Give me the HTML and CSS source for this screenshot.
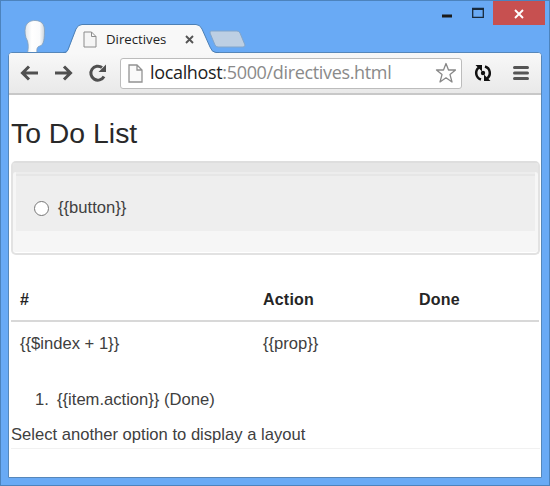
FILE: index.html
```html
<!DOCTYPE html>
<html lang="en">
<head>
<meta charset="utf-8">
<title>Directives</title>
<link rel="stylesheet" href="styles.css">
</head>
<body>
<div class="window">
  <header class="titlebar">
    <svg class="profile" width="26" height="34" viewBox="0 0 26 34">
      <defs><linearGradient id="face"><stop offset="0" stop-color="#dfe5eb"/><stop offset=".35" stop-color="#fff"/><stop offset=".75" stop-color="#fafbfc"/><stop offset="1" stop-color="#cbd4dc"/></linearGradient></defs>
      <path d="M4.500 34C5.500 29 5.500 26 4.500 22C2 18 1.500 12 2.500 8C4 3 8 1.500 12 1.500C18 1.500 21.500 5 21.500 11C21.500 19 21 26 17 27C14 27.500 13.500 30 14 34Z" fill="url(#face)" stroke="#849fba" stroke-width=".8"/>
    </svg>
    <div class="tab">
      <svg class="tab-shape" width="156" height="30" viewBox="0 0 156 30">
        <path d="M0 30C4 29 5 27 6 24L13 5Q15 .8 19 .8H133Q137 .8 139 5L147 23Q149 28.500 153 28.500V30Z" fill="#f8f8f8"/>
        <path d="M0 28.500C4 28.500 5 26 6 23L13 5Q15 .5 19 .5H133Q137 .5 139 5L147 23Q149 28.500 153 28.500H156" fill="none" stroke="#4d80b5"/>
      </svg>
      <svg class="page-icon" width="14" height="17" viewBox="0 0 14 17"><path d="M1 1H8.500L13 5.500V16H1ZM8.500 1V5.500H13" fill="#f5f5f5" stroke="#8c8c8c"/></svg>
      <span class="tab-title">Directives</span>
      <svg class="tab-close" width="9" height="9" viewBox="0 0 9 9"><path d="M1 1L8 8M8 1L1 8" stroke="#555" stroke-width="1.900"/></svg>
    </div>
    <svg class="new-tab" width="37" height="18" viewBox="0 0 37 18"><path d="M2 1H28Q30 1 31 3L36 15Q36 17 34 17H9Q7 17 6 15L1 3Q1 1 2 1Z" fill="#bdcfe3" stroke="#81a5cb"/></svg>
    <div class="controls">
      <svg width="10" height="22" viewBox="0 0 10 22"><path d="M0 15H10" stroke="#1b1b1b" stroke-width="3"/></svg>
      <svg width="12" height="22" viewBox="0 0 12 22"><path d="M.7 7.500H11.300V16.300H.7Z" fill="none" stroke="#182a3c" stroke-width="1.300"/><path d="M0 8H12" stroke="#182a3c" stroke-width="2"/></svg>
      <div class="close"><svg width="10" height="10" viewBox="0 0 10 10"><path d="M1 1L9 9M9 1L1 9" stroke="#fff" stroke-width="1.900"/></svg></div>
    </div>
  </header>
  <main class="browser">
    <nav class="toolbar">
      <svg width="88" height="20" viewBox="0 0 88 20" fill="none" stroke="#505050" stroke-width="3">
        <path d="M19 10H4M10 3.500L3.500 10L10 16.500"/>
        <path d="M36 10H51M45 3.500L51.500 10L45 16.500"/>
        <path d="M85 13.500A7 7 0 1 1 83 4.500"/><path d="M87 1.500V9H79.500Z" fill="#505050" stroke="none"/>
      </svg>
      <div class="address">
        <svg class="page-icon" width="15" height="19" viewBox="0 0 15 19"><path d="M1 1H9L14 6V18H1ZM9 1V6H14" fill="#fafafa" stroke="#929292" stroke-width="1.300"/></svg>
        <span class="url"><b>localhost</b>:5000/directives.html</span>
        <svg class="star" width="22" height="22" viewBox="0 0 22 22"><path d="M11 1.500L13.500 8H20.500L15 12.600L17 20L11 15.800L5 20L7 12.600L1.500 8H8.500Z" fill="#fff" stroke="#888" stroke-width="1.300" stroke-linejoin="round"/></svg>
      </div>
      <svg class="sync" width="18" height="18" viewBox="0 0 18 18"><circle cx="9" cy="9" r="2.200" fill="#111"/><path d="M7 15.500A6.800 6.800 0 0 1 5 3.500M11 2.500A6.800 6.800 0 0 1 13 14.500" fill="none" stroke="#111" stroke-width="2.500"/><path d="M1.500 1H8V7.500ZM16.500 17H10V10.500Z" fill="#111"/></svg>
      <svg class="menu" width="16" height="16" viewBox="0 0 16 16"><path d="M1.500 2.500H14.500M1.500 8H14.500M1.500 13.500H14.500" stroke="#555" stroke-width="3" stroke-linecap="round"/></svg>
    </nav>
    <section class="page">
      <h1><span>To Do List</span></h1>
      <div class="well"><div class="option"><i class="radio"></i><span>{{button}}</span></div></div>
      <table>
        <thead><tr><th class="num">#</th><th class="action">Action</th><th>Done</th></tr></thead>
        <tbody><tr><td>{{$index + 1}}</td><td>{{prop}}</td><td></td></tr></tbody>
      </table>
      <div class="item"><span class="marker">1.</span><span>{{item.action}} (Done)</span></div>
      <p>Select another option to display a layout</p>
    </section>
  </main>
</div>
</body>
</html>
```
FILE: styles.css
```css
* { box-sizing: border-box; }
body { margin: 0; font-family: "Liberation Sans", Arial, sans-serif; font-size: 16.6px; color: #404040; }
svg { display: block; flex: none; }
.window { width: 550px; height: 486px; background: #69aaf5; border: 1px solid #4c83bd; padding: 0 7px 7px; display: flex; flex-direction: column; }
.titlebar { height: 51px; flex: none; display: flex; align-items: flex-start; }
.profile { margin: 18px 0 0 15px; }
.tab { position: relative; z-index: 1; width: 156px; height: 30px; margin: 23px 0 0 14px; padding: 0 25px 0 20px; display: flex; align-items: center; }
.tab-shape { position: absolute; left: 0; top: 0; }
.tab .page-icon, .tab-title, .tab-close { position: relative; }
.tab-title { margin-left: 9px; font: 13.2px/20px "Open Sans", sans-serif; color: #222; white-space: nowrap; }
.tab-close { margin-left: auto; }
.new-tab { margin: 29px 0 0 -10px; position: relative; z-index: 2; }
.controls { margin-left: auto; margin-right: -3px; display: flex; }
.controls svg + svg { margin-left: 20px; }
.close { width: 52px; height: 24px; margin-left: 9px; padding-top: 2px; background: #c75050; display: flex; align-items: center; justify-content: center; }
.browser { flex: 1; border: 1px solid #5687ba; border-radius: 4px 4px 0 0; background: #fff; overflow: hidden; }
.toolbar { height: 42px; background: linear-gradient(#f8f8f8, #e9e9e9); border-bottom: 2px solid #c8c8c8; display: flex; align-items: center; padding-left: 10px; }
.address { width: 342px; height: 31px; margin-left: 13px; padding: 0 4px 0 7px; background: #fff; border: 1px solid #bcbcbc; border-radius: 3px; display: flex; align-items: center; }
.page-icon + .url { margin-left: 7px; }
.url { font: 18px/27px "Open Sans", sans-serif; letter-spacing: -.34px; color: #8a8a8a; white-space: nowrap; position: relative; top: -1px; }
.url b { color: #222; font-weight: 400; }
.star { margin-left: auto; }
.sync { margin-left: 12px; }
.menu { margin-left: 21px; }
.page { padding: 0 1px 0 2px; }
h1 { margin: 0; height: 66px; padding-top: 21px; font-size: 28.4px; line-height: 34px; font-weight: 400; color: #292929; }
.well { height: 94px; border: 2px solid #e2e2e2; border-radius: 5px; background: #f6f6f6; padding: 0 3px; border-top-color: #dedede; box-shadow: inset 0 9px #e6e6e6, inset 0 -1px #fff; }
.option { height: 68px; background: linear-gradient(#e6e6e6 9px, #ededed 9px, #ededed 11px, #e6e6e6 11px, #e6e6e6 13px, #eee 13px); display: flex; align-items: center; padding: 22px 0 0 18px; }
.radio { width: 15px; height: 15px; border: 1px solid #777; border-radius: 50%; background: #fff; margin-right: 9px; }
table { width: 528px; margin-top: 24px; border-collapse: collapse; table-layout: fixed; }
th, td { text-align: left; padding: 0 9px; }
th { height: 42px; border-bottom: 2px solid #d8d8d8; color: #252525; font-size: 16px; letter-spacing: .2px; }
.num { width: 243px; }
.action { width: 156px; }
td { height: 44px; }
.item { margin-top: 23px; height: 24px; line-height: 24px; display: flex; padding-left: 24px; }
.marker { width: 22px; }
p { margin: 11px 0 0; height: 26px; line-height: 24px; border-bottom: 1px solid #f1f1f1; }
```
